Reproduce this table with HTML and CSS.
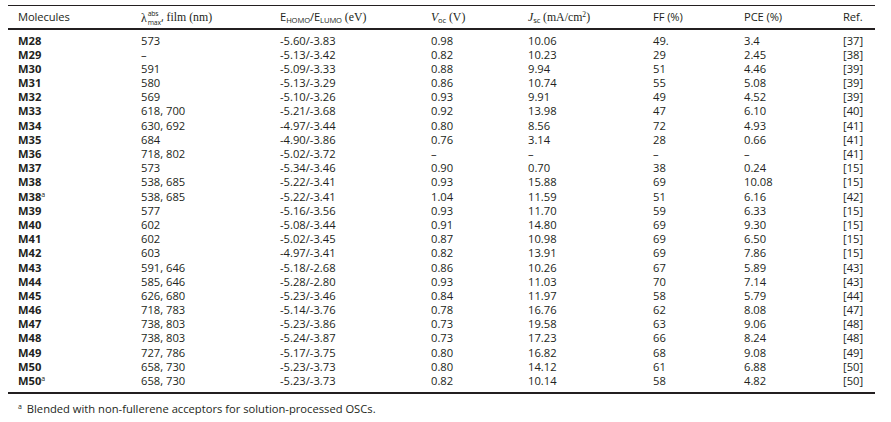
FILE: index.html
```html
<!DOCTYPE html>
<html>
<head>
<meta charset="utf-8">
<link rel="stylesheet" href="styles.css">
</head>
<body>
<div class="wrap">
<div class="tbl">
<div class="row head">
<div class="first">Molecules</div>
<div><span class="lam">λ<span class="stack"><span class="up">abs</span><span class="dn">max</span></span></span>, <span class="serif">film (nm)</span></div>
<div>E<span class="sc">HOMO</span>/E<span class="sc">LUMO</span> <span class="serif">(eV)</span></div>
<div><i>V</i><sub>oc</sub> <span class="serif">(V)</span></div>
<div><i>J</i><sub>sc</sub> <span class="serif">(mA/cm<sup>2</sup>)</span></div>
<div>FF (%)</div>
<div>PCE (%)</div>
<div>Ref.</div>
</div>
<div class="body">
<div class="row"><div class="first">M28</div><div>573</div><div>-5.60/-3.83</div><div>0.98</div><div>10.06</div><div>49.</div><div>3.4</div><div>[37]</div></div>
<div class="row"><div class="first">M29</div><div>–</div><div>-5.13/-3.42</div><div>0.82</div><div>10.23</div><div>29</div><div>2.45</div><div>[38]</div></div>
<div class="row"><div class="first">M30</div><div>591</div><div>-5.09/-3.33</div><div>0.88</div><div>9.94</div><div>51</div><div>4.46</div><div>[39]</div></div>
<div class="row"><div class="first">M31</div><div>580</div><div>-5.13/-3.29</div><div>0.86</div><div>10.74</div><div>55</div><div>5.08</div><div>[39]</div></div>
<div class="row"><div class="first">M32</div><div>569</div><div>-5.10/-3.26</div><div>0.93</div><div>9.91</div><div>49</div><div>4.52</div><div>[39]</div></div>
<div class="row"><div class="first">M33</div><div>618, 700</div><div>-5.21/-3.68</div><div>0.92</div><div>13.98</div><div>47</div><div>6.10</div><div>[40]</div></div>
<div class="row"><div class="first">M34</div><div>630, 692</div><div>-4.97/-3.44</div><div>0.80</div><div>8.56</div><div>72</div><div>4.93</div><div>[41]</div></div>
<div class="row"><div class="first">M35</div><div>684</div><div>-4.90/-3.86</div><div>0.76</div><div>3.14</div><div>28</div><div>0.66</div><div>[41]</div></div>
<div class="row"><div class="first">M36</div><div>718, 802</div><div>-5.02/-3.72</div><div>–</div><div>–</div><div>–</div><div>–</div><div>[41]</div></div>
<div class="row"><div class="first">M37</div><div>573</div><div>-5.34/-3.46</div><div>0.90</div><div>0.70</div><div>38</div><div>0.24</div><div>[15]</div></div>
<div class="row"><div class="first">M38</div><div>538, 685</div><div>-5.22/-3.41</div><div>0.93</div><div>15.88</div><div>69</div><div>10.08</div><div>[15]</div></div>
<div class="row"><div class="first">M38<sup class="fn">a</sup></div><div>538, 685</div><div>-5.22/-3.41</div><div>1.04</div><div>11.59</div><div>51</div><div>6.16</div><div>[42]</div></div>
<div class="row"><div class="first">M39</div><div>577</div><div>-5.16/-3.56</div><div>0.93</div><div>11.70</div><div>59</div><div>6.33</div><div>[15]</div></div>
<div class="row"><div class="first">M40</div><div>602</div><div>-5.08/-3.44</div><div>0.91</div><div>14.80</div><div>69</div><div>9.30</div><div>[15]</div></div>
<div class="row"><div class="first">M41</div><div>602</div><div>-5.02/-3.45</div><div>0.87</div><div>10.98</div><div>69</div><div>6.50</div><div>[15]</div></div>
<div class="row"><div class="first">M42</div><div>603</div><div>-4.97/-3.41</div><div>0.82</div><div>13.91</div><div>69</div><div>7.86</div><div>[15]</div></div>
<div class="row"><div class="first">M43</div><div>591, 646</div><div>-5.18/-2.68</div><div>0.86</div><div>10.26</div><div>67</div><div>5.89</div><div>[43]</div></div>
<div class="row"><div class="first">M44</div><div>585, 646</div><div>-5.28/-2.80</div><div>0.93</div><div>11.03</div><div>70</div><div>7.14</div><div>[43]</div></div>
<div class="row"><div class="first">M45</div><div>626, 680</div><div>-5.23/-3.46</div><div>0.84</div><div>11.97</div><div>58</div><div>5.79</div><div>[44]</div></div>
<div class="row"><div class="first">M46</div><div>718, 783</div><div>-5.14/-3.76</div><div>0.78</div><div>16.76</div><div>62</div><div>8.08</div><div>[47]</div></div>
<div class="row"><div class="first">M47</div><div>738, 803</div><div>-5.23/-3.86</div><div>0.73</div><div>19.58</div><div>63</div><div>9.06</div><div>[48]</div></div>
<div class="row"><div class="first">M48</div><div>738, 803</div><div>-5.24/-3.87</div><div>0.73</div><div>17.23</div><div>66</div><div>8.24</div><div>[48]</div></div>
<div class="row"><div class="first">M49</div><div>727, 786</div><div>-5.17/-3.75</div><div>0.80</div><div>16.82</div><div>68</div><div>9.08</div><div>[49]</div></div>
<div class="row"><div class="first">M50</div><div>658, 730</div><div>-5.23/-3.73</div><div>0.80</div><div>14.12</div><div>61</div><div>6.88</div><div>[50]</div></div>
<div class="row"><div class="first">M50<sup class="fn">a</sup></div><div>658, 730</div><div>-5.23/-3.73</div><div>0.82</div><div>10.14</div><div>58</div><div>4.82</div><div>[50]</div></div>
</div>
</div>
<p class="note"><sup class="fnmark">a</sup> Blended with non-fullerene acceptors for solution-processed OSCs.</p>
</div>
</body>
</html>
```

FILE: styles.css
```css
html, body {
  margin: 0;
  padding: 0;
  background: #fff;
}
body {
  font-family: "Open Sans", "Lato", sans-serif;
  font-size: 11.2px;
  color: #231f20;
}
.wrap {
  padding: 5px 16px 0 8px;
}
.tbl {
  width: 867px;
  border-top: 1.5px solid #231f20;
  border-bottom: 2px solid #231f20;
}
.row {
  display: grid;
  grid-template-columns: 133px 139px 151px 97px 125px 91px 99px 32px;
  height: 14.2px;
  line-height: 14.2px;
  white-space: nowrap;
}
.row.head {
  height: 21.5px;
  line-height: 21px;
  border-bottom: 2px solid #231f20;
  letter-spacing: -0.1px;
}
.body {
  padding: 4px 0 3.5px 0;
}
.first {
  padding-left: 10px;
}
.body .first {
  font-weight: bold;
}
.serif {
  font-family: "Liberation Serif", serif;
  font-size: 11.8px;
  letter-spacing: 0;
}
.lam {
  display: inline-flex;
  align-items: center;
  font-family: "Liberation Serif", serif;
  font-size: 11.8px;
  line-height: 12px;
  vertical-align: middle;
}
.stack {
  display: inline-flex;
  flex-direction: column;
  font-family: "Open Sans", sans-serif;
  font-size: 6.8px;
  line-height: 7px;
  margin-left: 1px;
}
.stack .up { position: relative; top: -1px; }
.stack .dn { position: relative; top: 1px; }
.sc {
  font-size: 7.6px;
  position: relative;
  top: 2px;
}
sub {
  font-size: 7.6px;
  vertical-align: baseline;
  position: relative;
  top: 2px;
  font-family: "Open Sans", sans-serif;
}
sup {
  font-size: 7.6px;
  vertical-align: baseline;
  position: relative;
  top: -4px;
  line-height: 0;
}
i {
  font-family: "Liberation Serif", serif;
  font-size: 11.8px;
}
.fn {
  font-weight: normal;
  font-size: 7px;
  position: relative;
  top: -4px;
}
.note {
  margin: 8px 0 0 10px;
  line-height: 13px;
}
.fnmark {
  font-size: 7px;
  margin-right: 2px;
}
```
